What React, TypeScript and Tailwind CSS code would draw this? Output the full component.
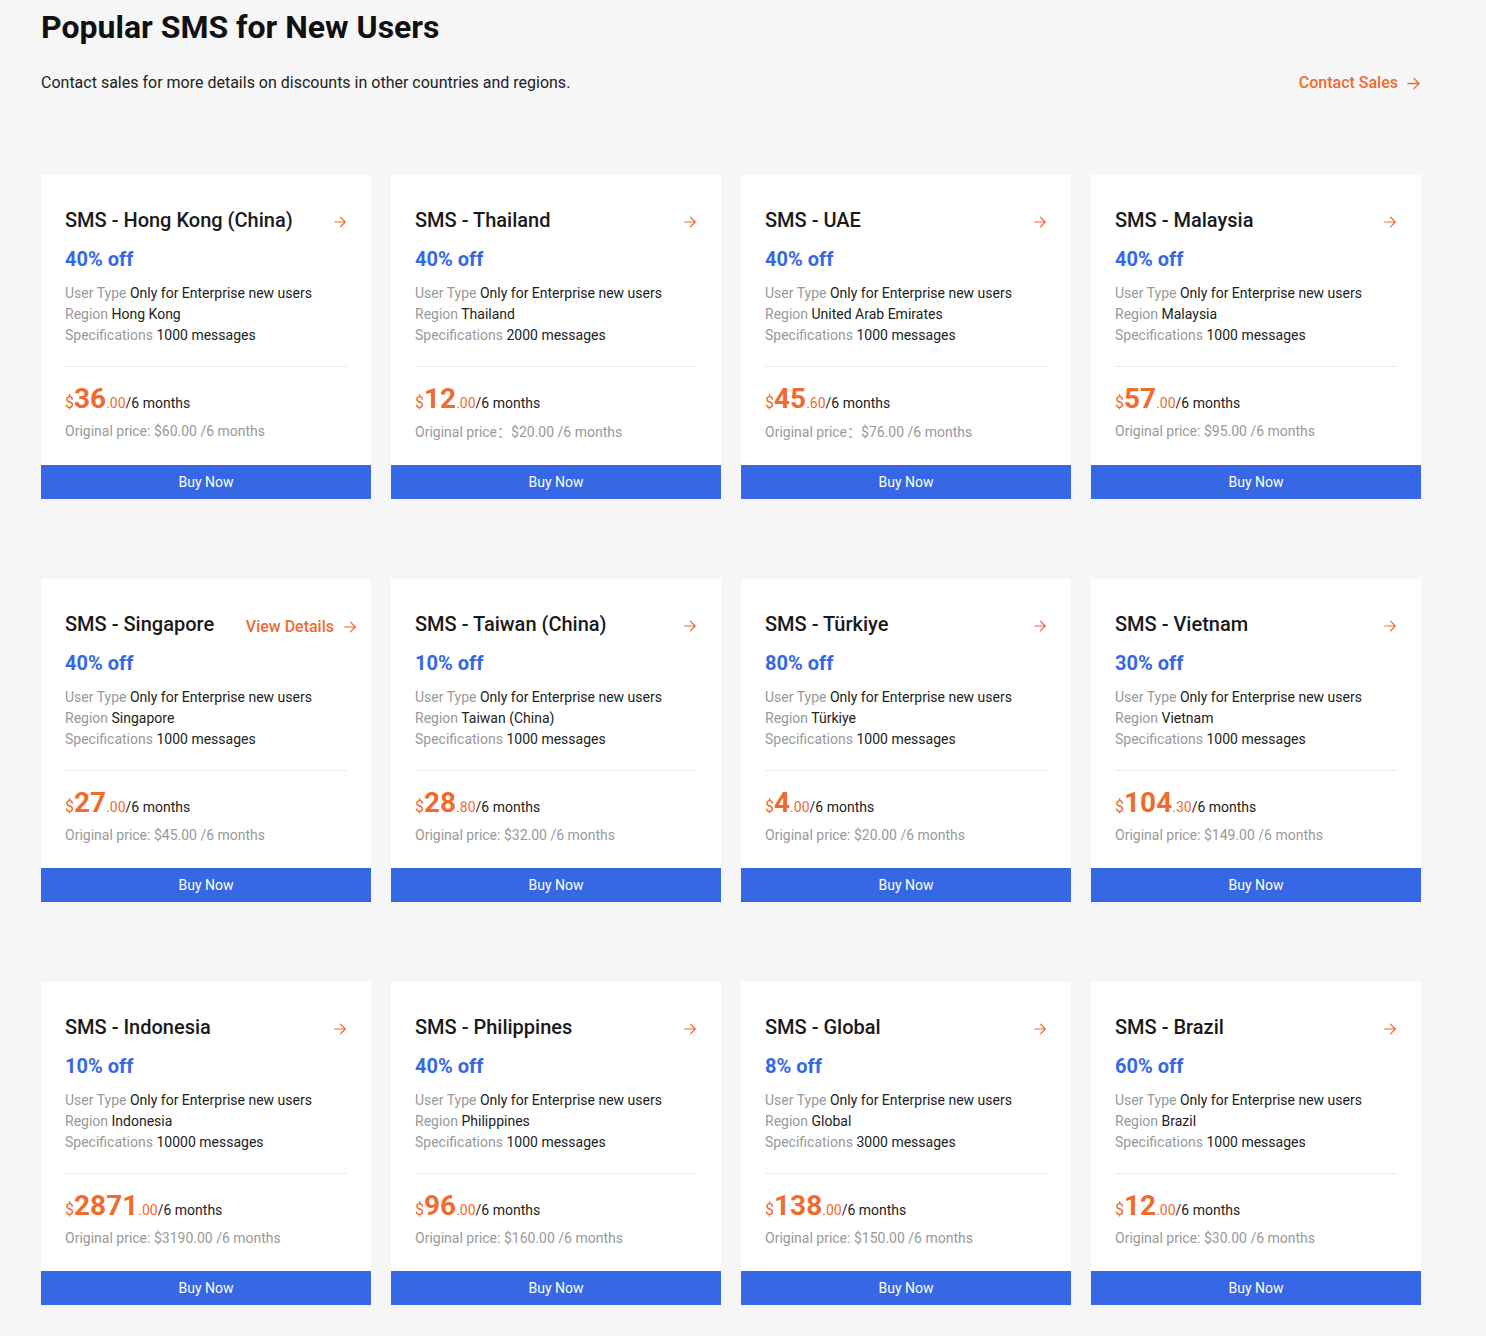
import React from 'react';

type Plan = {
  name: string;
  discount: string;
  region: string;
  spec: string;
  whole: string;
  cents: string;
  original: string;
  fullColon?: boolean;
  details?: boolean;
};

const plans: Plan[] = [
  { name: 'Hong Kong (China)', discount: '40% off', region: 'Hong Kong', spec: '1000 messages', whole: '36', cents: '.00', original: '$60.00 /6 months' },
  { name: 'Thailand', discount: '40% off', region: 'Thailand', spec: '2000 messages', whole: '12', cents: '.00', original: '$20.00 /6 months', fullColon: true },
  { name: 'UAE', discount: '40% off', region: 'United Arab Emirates', spec: '1000 messages', whole: '45', cents: '.60', original: '$76.00 /6 months', fullColon: true },
  { name: 'Malaysia', discount: '40% off', region: 'Malaysia', spec: '1000 messages', whole: '57', cents: '.00', original: '$95.00 /6 months' },
  { name: 'Singapore', discount: '40% off', region: 'Singapore', spec: '1000 messages', whole: '27', cents: '.00', original: '$45.00 /6 months', details: true },
  { name: 'Taiwan (China)', discount: '10% off', region: 'Taiwan (China)', spec: '1000 messages', whole: '28', cents: '.80', original: '$32.00 /6 months' },
  { name: 'Türkiye', discount: '80% off', region: 'Türkiye', spec: '1000 messages', whole: '4', cents: '.00', original: '$20.00 /6 months' },
  { name: 'Vietnam', discount: '30% off', region: 'Vietnam', spec: '1000 messages', whole: '104', cents: '.30', original: '$149.00 /6 months' },
  { name: 'Indonesia', discount: '10% off', region: 'Indonesia', spec: '10000 messages', whole: '2871', cents: '.00', original: '$3190.00 /6 months' },
  { name: 'Philippines', discount: '40% off', region: 'Philippines', spec: '1000 messages', whole: '96', cents: '.00', original: '$160.00 /6 months' },
  { name: 'Global', discount: '8% off', region: 'Global', spec: '3000 messages', whole: '138', cents: '.00', original: '$150.00 /6 months' },
  { name: 'Brazil', discount: '60% off', region: 'Brazil', spec: '1000 messages', whole: '12', cents: '.00', original: '$30.00 /6 months' },
];

const Arrow = ({ className }: { className?: string }) => (
  <svg viewBox="0 0 16 16" className={className} fill="none" stroke="currentColor" strokeWidth="1.4" strokeLinecap="round" strokeLinejoin="round">
    <path d="M2 8h12M8.5 2.5 14 8l-5.5 5.5" />
  </svg>
);

const PlanCard = ({ plan }: { plan: Plan }) => (
  <div className="bg-white flex flex-col">
    <div className="px-6 pt-[33px] pb-[22px]">
      <div className="flex items-center justify-between h-6">
        <h3 className="text-[20px] leading-6 font-medium text-[#1a1a1a]">SMS - {plan.name}</h3>
        {plan.details ? (
          <span className="flex items-center text-[16px] leading-6 font-medium text-[#ef6c2e] mt-[6px] -mr-[10px]">
            View Details
            <Arrow className="w-[14px] h-[14px] ml-[9px]" />
          </span>
        ) : (
          <Arrow className="w-[14px] h-[14px] text-[#ef6c2e] mt-[4px]" />
        )}
      </div>
      <div className="mt-[13px] text-[20px] leading-7 font-bold text-[#3568e6]">{plan.discount}</div>
      <div className="mt-[10px] text-[14px] leading-[21px] text-[#222]">
        <div><span className="text-[#999]">User Type </span>Only for Enterprise new users</div>
        <div><span className="text-[#999]">Region </span>{plan.region}</div>
        <div><span className="text-[#999]">Specifications </span>{plan.spec}</div>
      </div>
      <div className="mt-5 border-t border-[#ececec]" />
      <div className="mt-4 flex items-baseline leading-8">
        <span className="text-[16px] text-[#ef6c2e]">$</span>
        <span className="text-[28px] font-bold text-[#ef6c2e]">{plan.whole}</span>
        <span className="text-[14px] text-[#ef6c2e]">{plan.cents}</span>
        <span className="text-[14px] text-[#222]">/6 months</span>
      </div>
      <div className="mt-[2px] text-[14px] leading-[21px] text-[#999]">
        {plan.fullColon ? (
          <>
            Original price
            <span style={{ fontFamily: '"Noto Sans CJK SC", sans-serif' }}>：</span>
          </>
        ) : (
          'Original price: '
        )}
        {plan.original}
      </div>
    </div>
    <button className="mt-auto h-[34px] w-full bg-[#3668e6] text-white text-[14px]">Buy Now</button>
  </div>
);

export default function App() {
  return (
    <div className="min-h-screen bg-[#f6f6f6] px-[41px] pt-[7px] pb-8" style={{ fontFamily: 'Roboto, "Noto Sans", sans-serif' }}>
      <h1 className="text-[32px] leading-10 font-bold text-[#111]">Popular SMS for New Users</h1>
      <div className="mt-[24px] flex items-center justify-between w-[1380px]">
        <p className="text-[16px] leading-6 text-[#222]">Contact sales for more details on discounts in other countries and regions.</p>
        <a className="flex items-center text-[16px] font-medium text-[#ef6c2e]">
          Contact Sales
          <Arrow className="w-[15px] h-[15px] ml-2" />
        </a>
      </div>
      <div className="mt-[80px] grid grid-cols-4 gap-x-5 gap-y-20 w-[1380px]">
        {plans.map((p) => (
          <PlanCard key={p.name} plan={p} />
        ))}
      </div>
    </div>
  );
}
